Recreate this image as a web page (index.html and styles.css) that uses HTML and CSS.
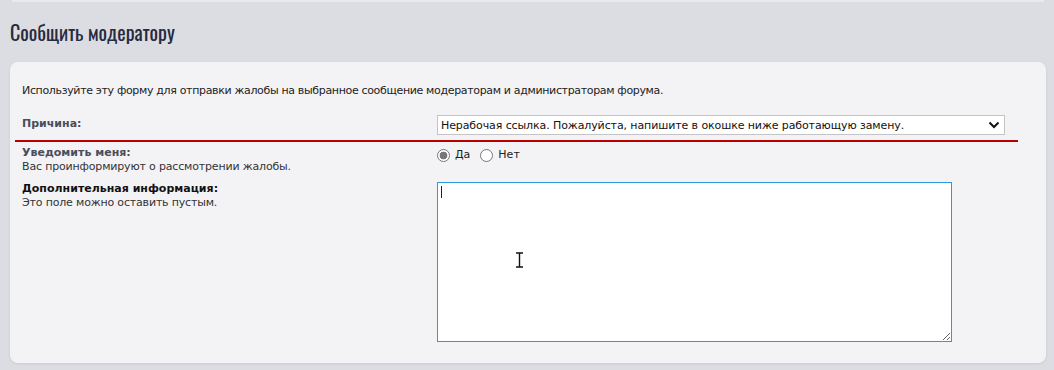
FILE: index.html
```html
<!DOCTYPE html>
<html lang="ru">
<head>
    <meta charset="UTF-8">
    <title>Сообщить модератору</title>
    <link rel="stylesheet" href="styles.css">
</head>
<body>
    <div class="prev-panel"></div>

    <h2 class="page-title">Сообщить модератору</h2>

    <div class="panel">
        <p class="intro">Используйте эту форму для отправки жалобы на выбранное сообщение модераторам и администраторам форума.</p>

        <div class="row row-reason">
            <div class="row-label"><strong class="label-muted">Причина:</strong></div>
            <div class="row-field">
                <div class="select-wrap">
                    <select class="reason-select">
                        <option>Нерабочая ссылка. Пожалуйста, напишите в окошке ниже работающую замену.</option>
                    </select>
                    <svg class="select-arrow" width="12" height="8" viewBox="0 0 12 8"><path d="M1.5 1.5 L6 6 L10.5 1.5" fill="none" stroke="#111" stroke-width="2"/></svg>
                </div>
            </div>
        </div>

        <div class="row">
            <div class="row-label">
                <strong class="label-muted">Уведомить меня:</strong>
                <span class="hint">Вас проинформируют о рассмотрении жалобы.</span>
            </div>
            <div class="row-field radios">
                <label class="radio"><input type="radio" name="notify" checked> Да</label>
                <label class="radio"><input type="radio" name="notify"> Нет</label>
            </div>
        </div>

        <div class="row">
            <div class="row-label">
                <strong>Дополнительная информация:</strong>
                <span class="hint">Это поле можно оставить пустым.</span>
            </div>
            <div class="row-field">
                <div class="textarea-wrap">
                    <textarea class="message"></textarea>
                    <span class="caret"></span>
                    <svg class="mouse-ibeam" width="9" height="16" viewBox="0 0 9 16"><path d="M1 1 H8 M4.5 1 V15 M1 15 H8" fill="none" stroke="#111" stroke-width="1.4"/></svg>
                </div>
            </div>
        </div>
    </div>
</body>
</html>
```

FILE: styles.css
```css
body {
    margin: 0;
    background: #dcdde2;
    font-family: "DejaVu Sans", Verdana, sans-serif;
    font-size: 11px;
    color: #333;
    height: 370px;
    overflow: hidden;
}

.prev-panel {
    height: 2px;
    margin: 0 10px 0 12px;
    background: #e9e9ec;
}

.page-title {
    margin: 0;
    padding: 18px 0 0 10px;
    height: 41px;
    box-sizing: border-box;
    font-family: "Oswald", "DejaVu Sans Condensed", "Liberation Sans Narrow", sans-serif;
    font-stretch: condensed;
    font-weight: normal;
    font-size: 20px;
    line-height: 24px;
    color: #272b40;
}

.panel {
    margin: 19px 8px 0 10px;
    padding: 22px 28px 17px 5px;
    background: #f3f3f5;
    border-radius: 8px;
    box-shadow: 0 1px 3px rgba(0, 0, 0, 0.08);
}

.intro {
    margin: 0 0 13px 7px;
    line-height: 14px;
    letter-spacing: -0.34px;
    color: #222;
}

.row {
    display: grid;
    grid-template-columns: 415px 1fr;
    padding: 4px 0 4px 7px;
}

.row-reason {
    padding-bottom: 5px;
    border-bottom: 2px solid #b80000;
}

.row-label {
    display: flex;
    flex-direction: column;
    line-height: 14px;
}

.row-reason .row-label {
    padding-top: 2px;
}

.row-label strong {
    color: #111;
}

.row-label .label-muted {
    color: #4a4d5c;
}

.hint {
    color: #333;
    letter-spacing: -0.17px;
}

.select-wrap {
    position: relative;
    width: 568px;
}

.reason-select {
    appearance: none;
    width: 100%;
    height: 20px;
    margin: 0;
    padding: 0 24px 0 3px;
    border: 1px solid #c4c4c4;
    background: #fff;
    font-family: "DejaVu Sans", Verdana, sans-serif;
    font-size: 11px;
    letter-spacing: -0.1px;
    color: #111;
}

.select-arrow {
    position: absolute;
    right: 5px;
    top: 6px;
}

.radios {
    display: flex;
    gap: 10px;
    padding-top: 2px;
    align-items: flex-start;
}

.radio {
    display: flex;
    align-items: center;
    gap: 5px;
    color: #222;
    line-height: 14px;
}

.radio input {
    appearance: none;
    width: 13px;
    height: 13px;
    margin: 0;
    border: 1px solid #767676;
    border-radius: 50%;
    background: #fff;
}

.radio input:checked {
    background: radial-gradient(circle, #777 0 3.6px, #fff 4.2px);
}

.textarea-wrap {
    position: relative;
    width: 515px;
    height: 160px;
}

.message {
    display: block;
    width: 515px;
    height: 160px;
    box-sizing: border-box;
    margin: 0;
    border: 1px solid #2a9bd8;
    background: #fff;
    outline: none;
}

.caret {
    position: absolute;
    left: 4px;
    top: 4px;
    width: 1px;
    height: 12px;
    background: #222;
}

.mouse-ibeam {
    position: absolute;
    left: 78px;
    top: 70px;
}
```
